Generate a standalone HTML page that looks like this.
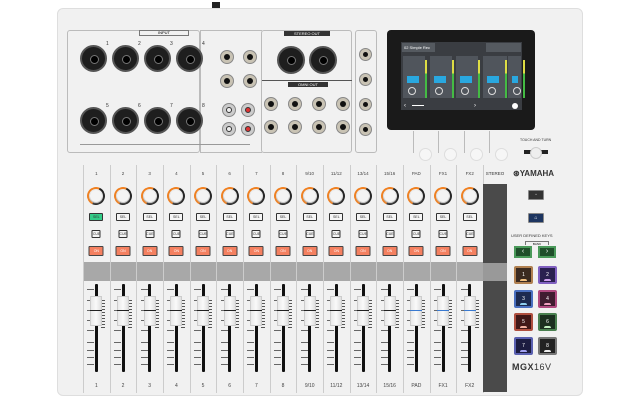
<!DOCTYPE html><html><head><meta charset="utf-8"><style>
*{margin:0;padding:0;box-sizing:border-box}
body{width:640px;height:400px;background:#fff;position:relative;overflow:hidden;font-family:"Liberation Sans",sans-serif}
.a{position:absolute}
.body{left:57px;top:8px;width:526px;height:388px;background:#f1f1f1;border-radius:6px;border:1px solid #dedede}
.jack{position:absolute;border-radius:50%;background:#c9c3b4;border:1px solid #888}
.jack::after{content:"";position:absolute;left:25%;top:25%;width:50%;height:50%;border-radius:50%;background:#111}
.xlr{position:absolute;width:27px;height:27px;border-radius:50%;background:#1e1e1e;border:2px solid #555}
.xlr::after{content:"";position:absolute;left:8px;top:8px;width:7px;height:7px;border-radius:50%;background:#000;border:1px solid #777}
.lbl{position:absolute;font-size:5px;color:#333;text-align:center}
.strip{position:absolute;top:165px;height:228px;border-left:1px solid #ccc}
.btn{position:absolute;left:50%;transform:translateX(-50%);font-size:3.5px;color:#333;text-align:center;border:1px solid #333;border-radius:1px}
.key{position:absolute;width:19px;height:18px;border-radius:2px;border:2px solid}
.key span{position:absolute;left:0;right:0;top:4px;font-size:5px;color:#fff;text-align:center}
.key i{position:absolute;left:4px;right:4px;bottom:1px;height:2px;border-radius:2px 2px 0 0}
</style></head><body>
<div class="a body"></div>
<div class="a" style="left:212px;top:2px;width:8px;height:6px;background:#222"></div>
<!-- rear panel -->
<div class="a" style="left:67px;top:30px;width:133px;height:123px;border:1px solid #bbb;border-radius:3px"></div>
<div class="a" style="left:200px;top:30px;width:62px;height:123px;border:1px solid #bbb;border-right:none"></div>
<div class="a" style="left:261px;top:30px;width:91px;height:123px;border:1px solid #bbb;border-radius:3px"></div>
<div class="a" style="left:355px;top:30px;width:22px;height:123px;border:1px solid #bbb;border-radius:3px"></div>
<div class="a" style="left:139px;top:30px;width:50px;height:6px;border:1px solid #777;font-size:4px;text-align:center;line-height:4px">INPUT</div>
<div class="a" style="left:284px;top:31px;width:46px;height:5px;background:#333;color:#fff;font-size:4px;text-align:center;line-height:5px">STEREO OUT</div>
<div class="a" style="left:288px;top:82px;width:40px;height:5px;background:#333;color:#fff;font-size:4px;text-align:center;line-height:5px">OMNI OUT</div>
<div class="a" style="left:262px;top:80px;width:90px;border-top:1px solid #555"></div>
<div class="a" style="left:80px;top:144px;width:170px;border-top:1px solid #999"></div>
<div id="rear"></div>
<!-- screen -->
<div class="a" style="left:387px;top:30px;width:148px;height:100px;background:#1a1a1a;border-radius:4px"></div>
<div class="a" style="left:401px;top:42px;width:121px;height:68px;background:#3a3d42"></div>
<div class="a" style="left:402px;top:43px;width:33px;height:9px;background:#555a60;color:#fff;font-size:4px;line-height:9px;padding-left:2px">02 Simple Rec</div>
<div class="a" style="left:486px;top:43px;width:35px;height:9px;background:#555a60"></div>
<div id="scr"></div>
<div class="a" style="left:520px;top:138px;font-size:3.5px;color:#333">TOUCH AND TURN</div>
<div class="a" style="left:524px;top:150px;width:24px;height:4px;background:#222"></div>
<div class="a" style="left:530px;top:147px;width:12px;height:12px;border-radius:50%;background:#eee;border:1px solid #ccc"></div>
<div id="strips"></div>
<!-- stereo strip -->
<div class="a" style="left:483px;top:184px;width:24px;height:208px;background:#4a4a4a"></div>
<div class="a" style="left:483px;top:263px;width:24px;height:18px;background:#999"></div>
<!-- right panel -->
<div class="a" style="left:513px;top:169px;font-size:8px;font-weight:bold;color:#333">⊛YAMAHA</div>
<div class="a" style="left:528px;top:190px;width:16px;height:10px;background:#333;border:1px solid #888;border-radius:1px;color:#fff;font-size:5px;text-align:center;line-height:8px">◦</div>
<div class="a" style="left:528px;top:213px;width:16px;height:10px;background:#1d3560;border:1px solid #888;border-radius:1px;color:#fff;font-size:5px;text-align:center;line-height:8px">⌂</div>
<div class="a" style="left:511px;top:233px;font-size:4px;color:#333">USER DEFINED KEYS</div>
<div class="a" style="left:525px;top:241px;width:24px;height:4px;border:1px solid #777;border-bottom:none;font-size:3px;text-align:center">BANK</div>
<div class="a" style="left:514px;top:246px;width:18px;height:12px;background:#1f4f2a;border:2px solid #4a9a5a;color:#fff;font-size:7px;text-align:center;line-height:8px">‹</div>
<div class="a" style="left:538px;top:246px;width:18px;height:12px;background:#1f4f2a;border:2px solid #4a9a5a;color:#fff;font-size:7px;text-align:center;line-height:8px">›</div>
<div class="key" style="left:514px;top:266px;background:#3a2a20;border-color:#b08050"><span>1</span><i style="background:#f0c080"></i></div>
<div class="key" style="left:538px;top:266px;background:#2a2050;border-color:#8060c0"><span>2</span><i style="background:#d0a0f0"></i></div>
<div class="key" style="left:514px;top:290px;background:#1c2a50;border-color:#4a70c0"><span>3</span><i style="background:#90d0f0"></i></div>
<div class="key" style="left:538px;top:290px;background:#401c30;border-color:#b04a80"><span>4</span><i style="background:#f0a0c0"></i></div>
<div class="key" style="left:514px;top:313px;background:#401818;border-color:#b05040"><span>5</span><i style="background:#f0b0a0"></i></div>
<div class="key" style="left:538px;top:313px;background:#1c3020;border-color:#4a8050"><span>6</span><i style="background:#c0f0c0"></i></div>
<div class="key" style="left:514px;top:337px;background:#1c1c40;border-color:#5a60b0"><span>7</span><i style="background:#a0a0f0"></i></div>
<div class="key" style="left:538px;top:337px;background:#222;border-color:#777"><span>8</span><i style="background:#eee"></i></div>
<div class="a" style="left:512px;top:362px;font-size:9px;font-weight:bold;color:#333;letter-spacing:0.5px">MGX<span style="font-weight:normal">16V</span></div>
<script>
var h='';
function A(s){h+=s}
// xlr combo
var xs=[80,112,144,176];
xs.forEach(function(x,i){A('<div class="xlr" style="left:'+x+'px;top:45px"></div><div class="lbl" style="left:'+(x+26)+'px;top:41px">'+(i+1)+'</div>');
A('<div class="xlr" style="left:'+x+'px;top:107px"></div><div class="lbl" style="left:'+(x+26)+'px;top:103px">'+(i+5)+'</div>');});
// line jacks 9-12
[[220,50],[243,50],[220,74],[243,74]].forEach(function(p){A('<div class="jack" style="left:'+p[0]+'px;top:'+p[1]+'px;width:14px;height:14px"></div>')});
// rca
[[222,103,'#eee'],[241,103,'#d33'],[222,122,'#eee'],[241,122,'#d33']].forEach(function(p){A('<div class="a" style="left:'+p[0]+'px;top:'+p[1]+'px;width:14px;height:14px;border-radius:50%;background:#ccc;border:1px solid #888"><div style="margin:3px;width:6px;height:6px;border-radius:50%;background:'+p[2]+';border:1px solid #333"></div></div>')});
// stereo out xlr
A('<div class="xlr" style="left:277px;top:46px;width:28px;height:28px"></div><div class="xlr" style="left:309px;top:46px;width:28px;height:28px"></div>');
for(var i=0;i<4;i++){A('<div class="jack" style="left:'+(264+i*24)+'px;top:97px;width:14px;height:14px"></div><div class="jack" style="left:'+(264+i*24)+'px;top:120px;width:14px;height:14px"></div>');
A('<div class="jack" style="left:359px;top:'+(48+i*25)+'px;width:13px;height:13px"></div>');}
document.getElementById('rear').innerHTML=h;h='';
// screen channels
var cx=[403,430,456,483,508];
cx.forEach(function(x,i){var w=i==3?24:22;A('<div class="a" style="left:'+x+'px;top:56px;width:'+(i==4?13:w)+'px;height:42px;background:#50555c"></div>');
A('<div class="a" style="left:'+(x+4)+'px;top:76px;width:'+(i==4?6:12)+'px;height:7px;background:#29a8e0"></div>');
A('<div class="a" style="left:'+(x+(i==4?15:22))+'px;top:60px;width:2px;height:38px;background:linear-gradient(#dd4 0,#dd4 35%,#4b4 35%)"></div>');
A('<div class="a" style="left:'+(x+5)+'px;top:87px;width:8px;height:8px;border-radius:50%;border:1px solid #ddd"></div>');});
A('<div class="a" style="left:404px;top:103px;color:#fff;font-size:6px">‹</div><div class="a" style="left:412px;top:105px;width:12px;height:1px;background:#fff"></div><div class="a" style="left:474px;top:103px;color:#fff;font-size:6px">›</div><div class="a" style="left:512px;top:103px;width:6px;height:6px;border-radius:50%;background:#fff"></div>');
// screen knobs
[400,425,451,476].forEach(function(x){A('<div class="a" style="left:'+(x+13)+'px;top:131px;width:1px;height:22px;background:#bbb"></div><div class="a" style="left:'+(x+19)+'px;top:148px;width:13px;height:13px;border-radius:50%;background:#f6f6f6;border:1px solid #ddd"></div>')});
document.getElementById('scr').innerHTML=h;h='';
// strips
var names=['1','2','3','4','5','6','7','8','9/10','11/12','13/14','15/16','PAD','FX1','FX2','STEREO'];
for(var i=0;i<16;i++){
 var x=83+i*26.67, w=26.67, st=i==15, c=x+w/2;
 if(st){x=483;w=24;c=495;}
 A('<div class="strip" style="left:'+x+'px;width:'+w+'px"></div>');
 A('<div class="lbl" style="left:'+x+'px;width:'+w+'px;top:171px;font-size:4.5px;color:'+(st?'#333':'#444')+'">'+names[i]+'</div>');
 A('<div class="lbl" style="left:'+x+'px;width:'+w+'px;top:383px;font-size:5px;color:'+(st?'#fff':'#444')+'">'+names[i]+'</div>');
 // knob
 var r=st?10:9;
 A('<div class="a" style="left:'+(c-r)+'px;top:'+(196-r)+'px;width:'+2*r+'px;height:'+2*r+'px;border-radius:50%;border:2px solid #f08020;border-right-color:#222;border-bottom-color:'+(st?'#f08020':'#222')+';transform:rotate(-20deg)"></div>');
 A('<div class="a" style="left:'+(c-r+3)+'px;top:'+(196-r+3)+'px;width:'+(2*r-6)+'px;height:'+(2*r-6)+'px;border-radius:50%;background:#f4f4f4;box-shadow:0 1px 2px #aaa"></div>');
 A('<div class="btn" style="left:'+c+'px;top:213px;width:14px;height:8px;line-height:6px;background:'+(i==0?'#3c8':'#f5f5f5')+'">SEL</div>');
 A('<div class="btn" style="left:'+c+'px;top:230px;width:9px;height:8px;line-height:6px;background:#f5f5f5">CUE</div>');
 A('<div class="btn" style="left:'+c+'px;top:246px;width:15px;height:10px;line-height:8px;background:#f48060;color:#fff;border-color:#444">ON</div>');
 if(!st)A('<div class="a" style="left:'+x+'px;top:262px;width:'+w+'px;height:19px;background:#a8a8a8;border-left:1px solid #ccc"></div>');
 // fader
 for(var t=0;t<9;t++){var y=[289,300,310,320,330,342,350,357,364][t];A('<div class="a" style="left:'+(c-9)+'px;top:'+y+'px;width:7px;height:1px;background:'+(st?'#ccc':'#666')+'"></div>');}
 for(var t=0;t<10;t++)A('<div class="a" style="left:'+(c+5)+'px;top:'+(300+t*3)+'px;width:4px;height:1px;background:'+(st?'#bbb':'#555')+'"></div>');
 A('<div class="a" style="left:'+(c-1.5)+'px;top:284px;width:3px;height:88px;background:#111;border-radius:1px"></div>');
 var lc=(i>=12&&i<15)?'#3a7ad0':(st?'#d03030':'#222');
 A('<div class="a" style="left:'+(c-6)+'px;top:'+(st?291:296)+'px;width:12px;height:'+(st?36:30)+'px;background:linear-gradient(90deg,#e8e8e8,#fafafa,#e0e0e0);border:1px solid #ccc"></div>');
 A('<div class="a" style="left:'+(c-6)+'px;top:'+(st?309:310)+'px;width:12px;height:1px;background:'+lc+'"></div>');
}
A('<div class="a" style="left:57px;top:384px;width:526px;height:1px"></div>');
document.getElementById('strips').innerHTML=h;
</script>
</body></html>
